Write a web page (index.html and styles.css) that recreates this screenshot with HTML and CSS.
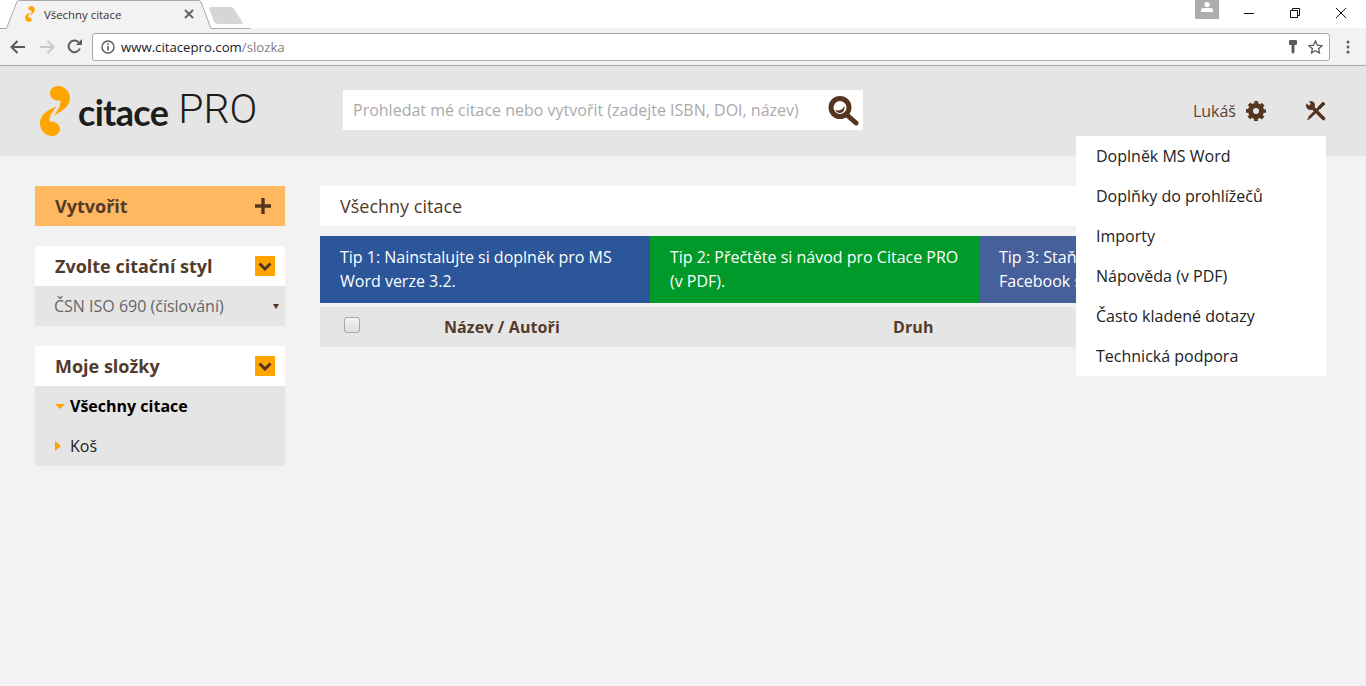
FILE: index.html
```html
<!DOCTYPE html>
<html lang="cs">
<head>
<meta charset="utf-8">
<title>Všechny citace</title>
<link rel="stylesheet" href="styles.css">
</head>
<body>
<div class="browser">
  <div class="tabbar">
    <svg class="tab-shape" width="250" height="29" viewBox="0 0 250 29">
      <path d="M0 28.500H6.500L17 1.500Q18 .5 20 .5H198Q200 .5 201 2L211 28.500H250" fill="#f2f2f2" stroke="#a9a9a9"/>
      <path d="M209 8Q209 7 211 7H231Q233 7 234 9L242.500 22Q243.500 24 241 24H218Q215 24 214 22Z" fill="#d6d6d6"/>
    </svg>
    <div class="tab">
      <svg class="tab-logo" width="10" height="16" viewBox="0 0 30 50"><use href="#logo-mark"/></svg>
      <span class="tab-title">Všechny citace</span>
      <svg class="tab-close" width="10" height="10" viewBox="0 0 10 10"><path d="M1 1L9 9M9 1L1 9" stroke="#5f5f5f" stroke-width="1.800"/></svg>
    </div>
    <div class="winctl">
      <div class="profile"><svg width="12" height="10" viewBox="0 0 12 10"><circle cx="6" cy="2.600" r="2.600" fill="#fff"/><path d="M0 10V8Q0 6 3 6H9Q12 6 12 8V10Z" fill="#fff"/></svg></div>
      <svg class="ctl ctl-min" width="10" height="10" viewBox="0 0 10 10"><path d="M0 5.500H10" stroke="#111"/></svg>
      <svg class="ctl ctl-max" width="10" height="10" viewBox="0 0 10 10"><path d="M.5 2.500H7.500V9.500H.5ZM2.500 2.500V.5H9.500V7.500H7.500" fill="none" stroke="#111"/></svg>
      <svg class="ctl ctl-close" width="10" height="10" viewBox="0 0 10 10"><path d="M0 0L10 10M10 0L0 10" stroke="#111"/></svg>
    </div>
  </div>
  <div class="toolbar">
    <svg class="nav-back" width="16" height="14" viewBox="0 0 16 14"><path d="M15 7H2M7.500 1L1.500 7L7.500 13" fill="none" stroke="#5a5a5a" stroke-width="2"/></svg>
    <svg class="nav-fwd" width="16" height="14" viewBox="0 0 16 14"><path d="M1 7H14M8.500 1L14.500 7L8.500 13" fill="none" stroke="#c8c8c8" stroke-width="2"/></svg>
    <svg class="nav-reload" width="15" height="15" viewBox="0 0 15 15"><path d="M12.800 9.500A5.800 5.800 0 1 1 11.500 3.300" fill="none" stroke="#5a5a5a" stroke-width="2"/><path d="M9 6H15V0Z" fill="#5a5a5a"/></svg>
    <div class="omnibox">
      <svg class="info" width="14" height="14" viewBox="0 0 14 14"><circle cx="7" cy="7" r="6" fill="none" stroke="#5a5a5a" stroke-width="1.400"/><path d="M7 6V10.500M7 3.200V4.800" stroke="#5a5a5a" stroke-width="1.600"/></svg>
      <span class="url">www.citacepro.com<span class="url-path">/slozka</span></span>
      <svg class="key" width="8" height="14" viewBox="0 0 8 14"><path d="M1 0H7Q8 0 8 1V4Q8 5 7 5H5.500V12L4 14L2.500 12V5H1Q0 5 0 4V1Q0 0 1 0Z" fill="#5a5a5a"/></svg>
      <svg class="star" width="15" height="14" viewBox="0 0 15 14"><path d="M7.500 1L9.400 5.200L14 5.700L10.600 8.700L11.500 13L7.500 10.800L3.500 13L4.400 8.700L1 5.700L5.600 5.200Z" fill="none" stroke="#5a5a5a" stroke-width="1.300"/></svg>
    </div>
    <svg class="dots" width="4" height="14" viewBox="0 0 4 14"><circle cx="2" cy="2" r="1.500" fill="#5a5a5a"/><circle cx="2" cy="7" r="1.500" fill="#5a5a5a"/><circle cx="2" cy="12" r="1.500" fill="#5a5a5a"/></svg>
  </div>
</div>

<header class="header">
  <a class="logo">
    <svg class="logo-mark" width="30" height="50" viewBox="0 0 30 50">
      <defs>
        <g id="logo-mark" fill="#ffa500">
          <path d="M18 0C25 0 30 6 30 12C30 20 23 25 14 29.500C17 25 21 20 20.500 14.500C14 15 10 12 10 7C10 3 14 0 18 0Z"/>
          <path d="M12 50C5 50 0 44 0 37C0 29 7 24 16.500 20.500C13 25 9 30 9.500 35.500C15 35 20 38 20 43C20 47 16 50 12 50Z"/>
        </g>
      </defs>
      <use href="#logo-mark"/>
    </svg>
    <span class="logo-citace">citace</span>
    <span class="logo-pro">PRO</span>
  </a>
  <form class="search">
    <input class="search-input" type="text" placeholder="Prohledat mé citace nebo vytvořit (zadejte ISBN, DOI, název)">
    <svg class="search-icon" width="31" height="30" viewBox="0 0 31 30">
      <circle cx="12" cy="11.500" r="9" fill="none" stroke="#55351f" stroke-width="5"/>
      <path d="M19 19L28 27" stroke="#55351f" stroke-width="5" stroke-linecap="round"/>
      <path d="M7 13.500C10 15.500 14 14.500 16.500 10C17 14 15 17 12 17C10 17 8 16 7 13.500Z" fill="#55351f"/>
    </svg>
  </form>
  <div class="user">
    <span class="user-name">Lukáš</span>
    <svg class="gear" width="20" height="20" viewBox="0 0 20 20">
      <circle cx="10" cy="10" r="5.500" fill="none" stroke="#55351f" stroke-width="5"/>
      <circle cx="10" cy="10" r="8.500" fill="none" stroke="#55351f" stroke-width="3" stroke-dasharray="3.700 2.975" stroke-dashoffset="1.850"/>
    </svg>
    <svg class="tools" width="20" height="20" viewBox="0 0 20 20">
      <circle cx="4.500" cy="4.500" r="4.500" fill="#55351f"/>
      <path d="M-.5 1.500L2.500 -1L5 3.500L3.500 5Z" fill="#e5e5e5"/>
      <path d="M5 5L17.500 17.500" stroke="#55351f" stroke-width="3.600" stroke-linecap="round"/>
      <path d="M12.500 5.500L17 1L19 3L14.500 7.500L12.500 7.500Z" fill="#55351f" stroke="#55351f"/>
      <path d="M14 6L3.500 16.500" stroke="#55351f" stroke-width="2.800"/>
      <path d="M4.500 17.500L1 19.500L2.500 15.500Z" fill="#55351f"/>
    </svg>
  </div>
</header>

<nav class="tools-menu">
  <a class="tools-item">Doplněk MS Word</a>
  <a class="tools-item">Doplňky do prohlížečů</a>
  <a class="tools-item">Importy</a>
  <a class="tools-item">Nápověda (v PDF)</a>
  <a class="tools-item">Často kladené dotazy</a>
  <a class="tools-item">Technická podpora</a>
</nav>

<main class="main">
  <aside class="sidebar">
    <div class="create">
      <span>Vytvořit</span>
      <svg width="16" height="16" viewBox="0 0 16 16"><path d="M8 0V16M0 8H16" stroke="#55351f" stroke-width="3.400"/></svg>
    </div>
    <section class="panel">
      <div class="panel-head">
        <span>Zvolte citační styl</span>
        <span class="chev"><svg width="14" height="9" viewBox="0 0 14 9"><path d="M1.500 1.500L7 7L12.500 1.500" fill="none" stroke="#55351f" stroke-width="3"/></svg></span>
      </div>
      <div class="style-select">
        <span>ČSN ISO 690 (číslování)</span>
        <i class="select-caret"></i>
      </div>
    </section>
    <section class="panel">
      <div class="panel-head">
        <span>Moje složky</span>
        <span class="chev"><svg width="14" height="9" viewBox="0 0 14 9"><path d="M1.500 1.500L7 7L12.500 1.500" fill="none" stroke="#55351f" stroke-width="3"/></svg></span>
      </div>
      <ul class="folders">
        <li class="folder folder-open"><i class="tri-down"></i>Všechny citace</li>
        <li class="folder"><i class="tri-right"></i>Koš</li>
      </ul>
    </section>
  </aside>
  <section class="content">
    <h1 class="content-title">Všechny citace</h1>
    <div class="tips">
      <div class="tip tip-blue">Tip 1: Nainstalujte si doplněk pro MS Word verze 3.2.</div>
      <div class="tip tip-green">Tip 2: Přečtěte si návod pro Citace PRO (v PDF).</div>
      <div class="tip tip-fb">Tip 3: Staňte se fanouškem na Facebook stránce.</div>
    </div>
    <div class="table-head">
      <input class="check" type="checkbox">
      <span>Název / Autoři</span>
      <span>Druh</span>
    </div>
  </section>
</main>
</body>
</html>
```
FILE: styles.css
```css
* { box-sizing: border-box; }
html, body { margin: 0; height: 686px; overflow: hidden; }
body { background: #f2f2f2; font-family: "Open Sans", sans-serif; font-size: 16px; color: #533b2b; position: relative; }

.browser { height: 66px; background: #f2f2f2; border-bottom: 1px solid #a9a9a9; }
.tabbar { height: 28px; background: #fff; display: flex; position: relative; }
.tab-shape { position: absolute; left: 0; top: 0; }
.tab { position: relative; width: 200px; padding-left: 25px; height: 28px; display: flex; align-items: center; }
.tab-logo { flex: none; margin-right: 9px; }
.tab-title { font-size: 11.400px; color: #333; flex: none; width: 140px; line-height: 28px; padding-top: 1px; white-space: nowrap; }
.tab-close { flex: none; }
.winctl { margin-left: auto; display: flex; align-items: flex-start; height: 28px; }
.profile { width: 24px; height: 19px; background: #adadad; display: flex; justify-content: center; padding-top: 2px; margin-right: 25px; }
.ctl { margin-top: 8px; }
.ctl-min { margin-right: 36px; }
.ctl-max { margin-right: 36px; }
.ctl-close { margin-right: 20px; }

.toolbar { height: 37px; display: flex; align-items: center; padding: 0 16px 0 10px; }
.nav-back { margin-right: 13px; }
.nav-fwd { margin-right: 12px; }
.nav-reload { margin-right: 10px; }
.omnibox { width: 1238px; height: 28px; background: #fff; border: 1px solid #a9a9a9; border-radius: 3px; display: flex; align-items: center; padding: 0 6px 0 8px; }
.info { margin-right: 6px; }
.url { font-size: 13.200px; color: #222; flex: 1; }
.url-path { color: #808080; }
.key { margin-right: 11px; }
.star { flex: none; }
.dots { margin-left: 16px; }

.header { height: 90px; background: #e5e5e5; display: flex; align-items: center; padding: 0 40px; }
.logo { width: 303px; display: flex; align-items: center; height: 50px; flex: none; }
.logo-mark { flex: none; margin-right: 8px; }
.logo-citace { font-family: "Lato", sans-serif; font-weight: 700; font-size: 36px; line-height: 50px; color: #1d1d1b; padding-top: 2px; letter-spacing: -.7px; }
.logo-pro { font-family: "Roboto", sans-serif; font-weight: 300; font-size: 41px; line-height: 50px; color: #1d1d1b; margin-left: 10px; padding-bottom: 4px; }
.search { width: 520px; height: 40px; background: #fff; display: flex; align-items: center; padding: 0 4px 0 10px; margin-top: -2px; }
.search-input { flex: 1; min-width: 0; border: 0; outline: 0; padding: 0; background: none; font: 16px "Open Sans", sans-serif; color: #333; }
.search-input::placeholder { color: #aaa; opacity: 1; }
.search-icon { flex: none; margin-top: 2px; }
.user { margin-left: auto; display: flex; align-items: center; margin-top: -1px; }
.user-name { color: #5f4330; margin-right: 10px; margin-left: -1px; }
.gear { margin-right: 40px; }

.tools-menu { position: absolute; left: 1076px; top: 136px; width: 250px; background: #fff; display: flex; flex-direction: column; z-index: 2; }
.tools-item { height: 40px; line-height: 40px; padding-left: 20px; color: #222; }

.main { display: flex; padding: 30px 56px 0 35px; gap: 35px; }
.sidebar { width: 250px; flex: none; display: flex; flex-direction: column; gap: 20px; }
.create { height: 40px; background: #ffb85f; display: flex; justify-content: space-between; align-items: center; padding: 0 14px 0 20px; font-size: 18px; font-weight: 700; }
.panel-head { height: 40px; background: #fff; display: flex; justify-content: space-between; align-items: center; padding: 0 10px 0 20px; font-size: 18px; font-weight: 700; }
.chev { width: 20px; height: 20px; background: #ffa500; display: flex; align-items: center; justify-content: center; }
.style-select { height: 40px; background: #e5e5e5; display: flex; justify-content: space-between; align-items: center; padding: 0 6px 0 19px; color: #666; }
.select-caret { width: 0; height: 0; border-style: solid; border-width: 5px 3px 0; border-color: #4f3222 transparent transparent; }
.folders { list-style: none; margin: 0; padding: 0; background: #e5e5e5; }
.folder { height: 40px; display: flex; align-items: center; padding-left: 20px; color: #222; position: relative; }
.folder-open { font-weight: 700; color: #000; }
.tri-down { width: 0; height: 0; border-style: solid; border-width: 5px 5px 0; border-color: #ffa500 transparent transparent; margin-right: 5px; }
.tri-right { width: 0; height: 0; border-style: solid; border-width: 5px 0 5px 6px; border-color: transparent transparent transparent #ffa500; margin-right: 9px; }

.content { flex: 1; min-width: 0; }
.content-title { margin: 0; height: 40px; background: #fff; padding-left: 20px; font-size: 18px; font-weight: 400; line-height: 40px; }
.tips { margin-top: 10px; display: flex; }
.tip { width: 330px; height: 67px; padding: 9px 20px 0; color: #fff; line-height: 24px; flex: none; }
.tip-blue { background: #2b5699; }
.tip-green { background: #009a2a; }
.tip-fb { background: #46609c; padding-left: 19px; }
.table-head { margin-top: 4px; height: 40px; background: #e5e5e5; display: grid; grid-template-columns: 100px 449px auto; align-items: center; padding-left: 24px; font-weight: 700; letter-spacing: .1px; }
.check { appearance: none; width: 16px; height: 16px; margin: 0 0 4px; border: 1px solid #a9a9a9; border-radius: 3px; background: linear-gradient(#f4f4f4, #dcdcdc); }
```
